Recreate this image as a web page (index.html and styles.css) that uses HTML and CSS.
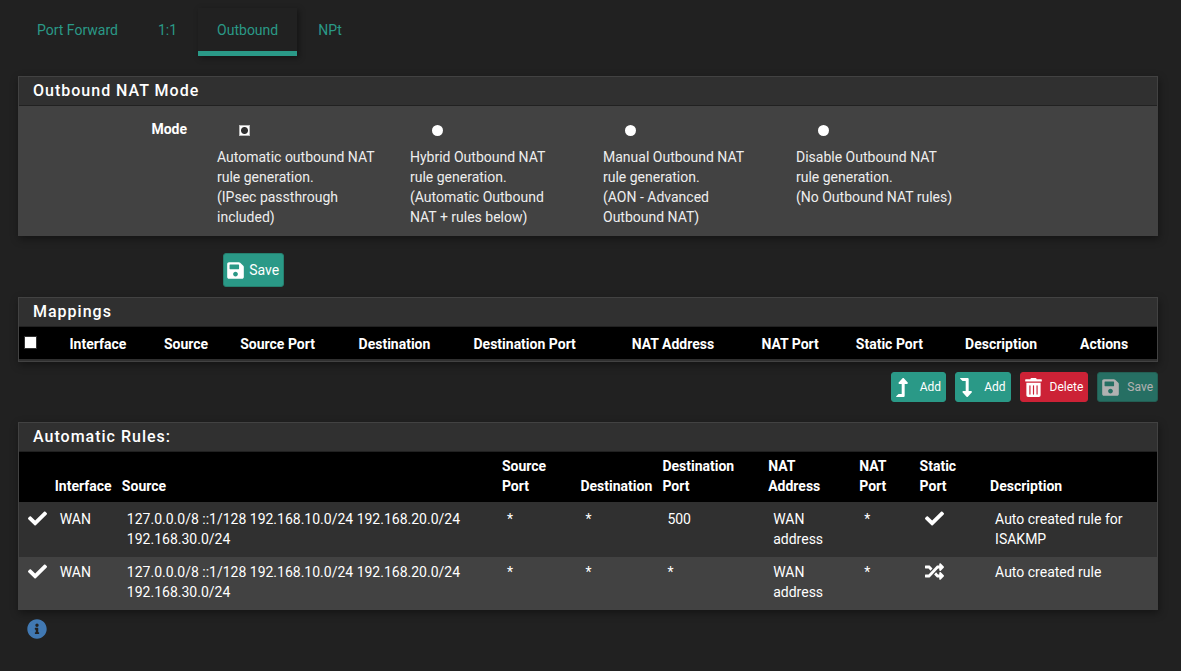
FILE: index.html
```html
<!DOCTYPE html>
<html lang="en">
<head>
  <meta charset="UTF-8" />
  <meta name="viewport" content="width=device-width, initial-scale=1.0" />
  <title>Firewall: NAT: Outbound</title>
  <link rel="stylesheet" href="styles.css">
</head>
<body>
  <svg class="sprite" aria-hidden="true">
    <symbol id="icon-save" viewBox="0 0 448 512"><path d="M433.941 129.941l-83.882-83.882A48 48 0 0 0 316.118 32H48C21.49 32 0 53.49 0 80v352c0 26.51 21.49 48 48 48h352c26.51 0 48-21.49 48-48V163.882a48 48 0 0 0-14.059-33.941zM224 416c-35.346 0-64-28.654-64-64 0-35.346 28.654-64 64-64s64 28.654 64 64c0 35.346-28.654 64-64 64zm96-304.52V212c0 6.627-5.373 12-12 12H76c-6.627 0-12-5.373-12-12V108c0-6.627 5.373-12 12-12h228.52c3.183 0 6.235 1.264 8.485 3.515l3.48 3.48A11.996 11.996 0 0 1 320 111.48z"/></symbol>
    <symbol id="icon-up" viewBox="0 0 320 512"><path d="M313.553 119.669L209.587 7.666c-9.485-10.214-25.676-10.229-35.174 0L70.438 119.669C56.232 134.969 66.862 160 88.025 160H152v272H68.024a11.996 11.996 0 0 0-8.485 3.515l-56 56C-4.021 499.074 1.333 512 12.024 512H208c13.255 0 24-10.745 24-24V160h63.966c21.184 0 31.807-25.021 17.587-40.331z"/></symbol>
    <symbol id="icon-down" viewBox="0 0 320 512"><path d="M313.553 392.331L209.587 504.334c-9.485 10.214-25.676 10.229-35.174 0L70.438 392.331C56.232 377.031 66.862 352 88.025 352H152V80H68.024a11.996 11.996 0 0 1-8.485-3.515l-56-56C-4.021 12.926 1.333 0 12.024 0H208c13.255 0 24 10.745 24 24v328h63.966c21.184 0 31.807 25.021 17.587 40.331z"/></symbol>
    <symbol id="icon-trash" viewBox="0 0 448 512"><path d="M32 464a48 48 0 0 0 48 48h288a48 48 0 0 0 48-48V128H32zm272-256a16 16 0 0 1 32 0v224a16 16 0 0 1-32 0zm-96 0a16 16 0 0 1 32 0v224a16 16 0 0 1-32 0zm-96 0a16 16 0 0 1 32 0v224a16 16 0 0 1-32 0zM432 32H312l-9.4-18.7A24 24 0 0 0 281.1 0H166.8a23.72 23.72 0 0 0-21.4 13.3L136 32H16A16 16 0 0 0 0 48v32a16 16 0 0 0 16 16h416a16 16 0 0 0 16-16V48a16 16 0 0 0-16-16z"/></symbol>
    <symbol id="icon-check" viewBox="0 0 512 512"><path d="M173.898 439.404l-166.4-166.4c-9.997-9.997-9.997-26.206 0-36.204l36.203-36.204c9.997-9.998 26.207-9.998 36.204 0L192 312.69 432.095 72.596c9.997-9.997 26.207-9.997 36.204 0l36.203 36.204c9.997 9.997 9.997 26.206 0 36.204l-294.4 294.401c-9.998 9.997-26.207 9.997-36.204-.001z"/></symbol>
    <symbol id="icon-random" viewBox="0 0 512 512"><path d="M504.971 359.029c9.373 9.373 9.373 24.569 0 33.941l-80 79.984c-15.01 15.01-40.971 4.49-40.971-16.971V416h-58.785a12.004 12.004 0 0 1-8.773-3.812l-70.556-75.596 53.333-57.143L352 336h32v-39.981c0-21.438 25.943-31.998 40.971-16.971l80 79.981zM12 176h84l52.781 56.551 53.333-57.143-70.556-75.596A11.999 11.999 0 0 0 122.785 96H12c-6.627 0-12 5.373-12 12v56c0 6.627 5.373 12 12 12zm372 0v39.984c0 21.46 25.961 31.98 40.971 16.971l80-79.984c9.373-9.373 9.373-24.569 0-33.941l-80-79.981C409.943 24.021 384 34.582 384 56.019V96h-58.785a12.004 12.004 0 0 0-8.773 3.812L96 336H12c-6.627 0-12 5.373-12 12v56c0 6.627 5.373 12 12 12h110.785c3.326 0 6.503-1.381 8.773-3.812L352 176h32z"/></symbol>
    <symbol id="icon-info" viewBox="0 0 512 512"><path d="M256 8C119.043 8 8 119.083 8 256c0 136.997 111.043 248 248 248s248-111.003 248-248C504 119.083 392.957 8 256 8zm0 110c23.196 0 42 18.804 42 42s-18.804 42-42 42-42-18.804-42-42 18.804-42 42-42zm56 254c0 6.627-5.373 12-12 12h-88c-6.627 0-12-5.373-12-12v-24c0-6.627 5.373-12 12-12h12v-64h-12c-6.627 0-12-5.373-12-12v-24c0-6.627 5.373-12 12-12h64c6.627 0 12 5.373 12 12v100h12c6.627 0 12 5.373 12 12v24z"/></symbol>
  </svg>

  <nav class="tabs">
    <a href="#forward">Port Forward</a>
    <a href="#one-to-one">1:1</a>
    <a href="#outbound" class="active">Outbound</a>
    <a href="#npt">NPt</a>
  </nav>

  <form>
    <section class="panel">
      <h2>Outbound NAT Mode</h2>
      <div class="mode-grid" role="radiogroup" aria-labelledby="mode-label">
        <span class="mode-label" id="mode-label">Mode</span>
        <label class="mode">
          <input type="radio" name="mode" value="automatic" checked />
          Automatic outbound NAT rule generation.<br>(IPsec passthrough included)
        </label>
        <label class="mode">
          <input type="radio" name="mode" value="hybrid" />
          Hybrid Outbound NAT rule generation.<br>(Automatic Outbound NAT + rules below)
        </label>
        <label class="mode">
          <input type="radio" name="mode" value="advanced" />
          Manual Outbound NAT rule generation.<br>(AON - Advanced Outbound NAT)
        </label>
        <label class="mode">
          <input type="radio" name="mode" value="disabled" />
          Disable Outbound NAT rule generation.<br>(No Outbound NAT rules)
        </label>
      </div>
    </section>
    <div class="form-actions">
      <button type="submit" class="btn"><svg class="icon"><use href="#icon-save"/></svg>Save</button>
    </div>
  </form>

  <section class="panel">
    <h2>Mappings</h2>
    <table class="mappings">
      <thead>
        <tr>
          <th><input type="checkbox" aria-label="Select all" /></th>
          <th>Interface</th>
          <th>Source</th>
          <th>Source Port</th>
          <th>Destination</th>
          <th>Destination Port</th>
          <th>NAT Address</th>
          <th>NAT Port</th>
          <th>Static Port</th>
          <th>Description</th>
          <th>Actions</th>
        </tr>
      </thead>
    </table>
  </section>

  <div class="table-actions">
    <button type="button" class="btn btn-sm btn-add"><svg class="icon icon-narrow"><use href="#icon-up"/></svg>Add</button>
    <button type="button" class="btn btn-sm btn-add"><svg class="icon icon-narrow"><use href="#icon-down"/></svg>Add</button>
    <button type="button" class="btn btn-sm btn-danger"><svg class="icon"><use href="#icon-trash"/></svg>Delete</button>
    <button type="button" class="btn btn-sm" disabled><svg class="icon"><use href="#icon-save"/></svg>Save</button>
  </div>

  <section class="panel">
    <h2>Automatic Rules:</h2>
    <table class="rules">
      <thead>
        <tr>
          <th></th>
          <th>Interface</th>
          <th>Source</th>
          <th>Source Port</th>
          <th>Destination</th>
          <th>Destination Port</th>
          <th>NAT Address</th>
          <th>NAT Port</th>
          <th>Static Port</th>
          <th>Description</th>
        </tr>
      </thead>
      <tbody>
        <tr>
          <td><svg class="icon icon-wide"><use href="#icon-check"/></svg></td>
          <td>WAN</td>
          <td>127.0.0.0/8 ::1/128 192.168.10.0/24 192.168.20.0/24 192.168.30.0/24</td>
          <td>*</td>
          <td>*</td>
          <td>500</td>
          <td>WAN address</td>
          <td>*</td>
          <td><svg class="icon icon-wide"><use href="#icon-check"/></svg></td>
          <td>Auto created rule for ISAKMP</td>
        </tr>
        <tr>
          <td><svg class="icon icon-wide"><use href="#icon-check"/></svg></td>
          <td>WAN</td>
          <td>127.0.0.0/8 ::1/128 192.168.10.0/24 192.168.20.0/24 192.168.30.0/24</td>
          <td>*</td>
          <td>*</td>
          <td>*</td>
          <td>WAN address</td>
          <td>*</td>
          <td><svg class="icon icon-wide"><use href="#icon-random"/></svg></td>
          <td>Auto created rule</td>
        </tr>
      </tbody>
    </table>
  </section>

  <button type="button" class="info" aria-label="Show information"><svg><use href="#icon-info"/></svg></button>
</body>
</html>
```
FILE: styles.css
```css
* {
  box-sizing: border-box;
}

body {
  font-family: Roboto, "Liberation Sans", sans-serif;
  font-size: 14px;
  line-height: 20px;
  margin: 0;
  padding: 8px 23px 0 18px;
  background: #212121;
  color: #fff;
}

.sprite {
  display: none;
}

.tabs {
  display: flex;
  gap: 2px;
  margin-bottom: 20px;
}

.tabs a {
  padding: 12px 19px 11px;
  border-bottom: 5px solid transparent;
  color: #2a9987;
  text-decoration: none;
}

.tabs a.active {
  border-bottom-color: #2a9987;
  box-shadow: 2px 2px 6px rgba(0, 0, 0, 0.4);
}

.panel {
  background: #303030;
  border: 1px solid #424242;
  box-shadow: 1px 3px 8px rgba(0, 0, 0, 0.4);
}

.panel h2 {
  margin: 0;
  padding: 4px 14px;
  border-bottom: 1px solid #212121;
  font-size: 16px;
  font-weight: 500;
  letter-spacing: 1px;
}

/* six equal columns, pulled out past the panel edge like a bootstrap row */
.mode-grid {
  display: grid;
  grid-template-columns: repeat(6, 1fr);
  margin: 0 -10px;
  padding: 13px 0 8px;
  background: linear-gradient(#424242, #424242) center / calc(100% - 20px) 100% no-repeat;
}

.mode-label {
  padding: 0 15px;
  font-weight: 700;
  text-align: right;
}

.mode {
  padding: 0 18px 0 15px;
  color: #eee;
}

.mode input {
  display: block;
  margin: 6px 0 11px 22px;
}

input[type="radio"] {
  appearance: none;
  width: 11px;
  height: 11px;
  border-radius: 50%;
  background: #fff;
}

input[type="radio"]:checked {
  border: 1px solid #bbb;
  border-radius: 0;
  background: radial-gradient(circle, #303030 3px, #fff 4px);
}

input[type="checkbox"] {
  appearance: none;
  display: block;
  width: 13px;
  height: 13px;
  margin: 0 0 3px;
  border: 1px solid #333;
  background: #fff;
}

.form-actions {
  padding: 17px 0 10px 18%;
}

.btn {
  display: inline-flex;
  align-items: center;
  gap: 5px;
  height: 34px;
  padding: 0 4px 0 3px;
  border: 1px solid #25806f;
  border-radius: 3px;
  background: #2a9987;
  color: #fff;
  font-family: inherit;
  font-size: 14px;
  cursor: pointer;
}

.btn-sm {
  gap: 8px;
  height: 30px;
  padding: 0 4px;
  font-size: 12px;
}

.btn-add {
  gap: 12px;
  border-color: #2a9987;
}

.btn-danger {
  background: #cc2236;
  border-color: #cc2236;
}

.btn:disabled {
  opacity: 0.65;
  cursor: default;
}

.icon {
  width: 17px;
  height: 19px;
  fill: currentColor;
}

.icon-narrow {
  width: 12px;
}

.icon-wide {
  display: block;
  width: 19px;
}

.table-actions {
  display: flex;
  justify-content: flex-end;
  gap: 9px;
  margin: 10px 0 20px;
}

table {
  width: 100%;
  table-layout: fixed;
  border-collapse: collapse;
}

thead {
  background: #000;
}

th {
  padding: 4px 5px 6px;
  text-align: left;
  vertical-align: bottom;
}

.mappings {
  border-bottom: 2px solid #303030;
}

.mappings th {
  padding: 7px 5px 5px;
  vertical-align: middle;
  white-space: nowrap;
}

.mappings th:nth-child(1) { width: 4%; }
.mappings th:nth-child(2) { width: 8.3%; }
.mappings th:nth-child(3) { width: 6.7%; }
.mappings th:nth-child(4) { width: 10.4%; }
.mappings th:nth-child(5) { width: 10.1%; }
.mappings th:nth-child(6) { width: 13.9%; }
.mappings th:nth-child(7) { width: 11.4%; }
.mappings th:nth-child(8) { width: 8.3%; }
.mappings th:nth-child(9) { width: 9.6%; }
.mappings th:nth-child(10) { width: 10.1%; }

.rules th:nth-child(1) { width: 2.7%; }
.rules th:nth-child(2) { width: 5.9%; }
.rules th:nth-child(3) { width: 33.4%; }
.rules th:nth-child(4) { width: 6.9%; }
.rules th:nth-child(5) { width: 7.2%; }
.rules th:nth-child(6) { width: 9.3%; }
.rules th:nth-child(7) { width: 8%; }
.rules th:nth-child(8) { width: 5.3%; }
.rules th:nth-child(9) { width: 6.2%; }

.rules td {
  padding: 5px 10px 7px;
  vertical-align: top;
}

.rules tbody tr:first-child td {
  padding-top: 7px;
  padding-bottom: 8px;
}

.rules tbody tr:nth-child(even) {
  background: #424242;
}

.rules td:first-child {
  padding-left: 9px;
}

.info {
  display: block;
  margin: 9px;
  padding: 0;
  border: none;
  background: none;
  color: #4179b3;
  cursor: pointer;
}

.info svg {
  display: block;
  width: 20px;
  height: 20px;
  fill: currentColor;
}
```
